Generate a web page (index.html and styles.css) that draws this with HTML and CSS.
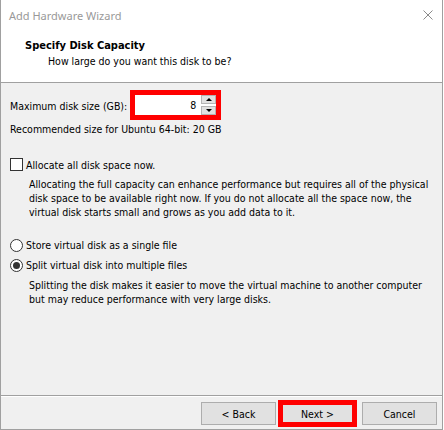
FILE: index.html
```html
<!DOCTYPE html>
<html lang="en">
<head>
<meta charset="utf-8">
<title>Add Hardware Wizard</title>
<link rel="stylesheet" href="styles.css">
</head>
<body>
<div class="window">
  <div class="titlebar">
    <span class="title">Add Hardware Wizard</span>
    <svg class="close" width="10" height="10" viewBox="0 0 10 10"><path d="M0.5 0.5 L9.5 9.5 M9.5 0.5 L0.5 9.5" stroke="#8a8a8a" stroke-width="1" fill="none"/></svg>
  </div>
  <div class="header">
    <div class="h-title">Specify Disk Capacity</div>
    <div class="h-sub">How large do you want this disk to be?</div>
  </div>
  <div class="content">
    <div class="size-row">
      <span class="size-label">Maximum disk size (GB):</span>
      <div class="spin-field highlight">
        <span class="value">8</span>
        <div class="spin">
          <span class="spin-btn"><span class="arrow-up"></span></span>
          <span class="spin-btn"><span class="arrow-down"></span></span>
        </div>
      </div>
    </div>
    <div class="rec">Recommended size for Ubuntu 64-bit: 20 GB</div>
    <div class="check-row">
      <span class="checkbox"></span>
      <span class="opt-label">Allocate all disk space now.</span>
    </div>
    <p class="desc desc-alloc">Allocating the full capacity can enhance performance but requires all of the physical disk space to be available right now. If you do not allocate all the space now, the virtual disk starts small and grows as you add data to it.</p>
    <div class="radio-row radio-first">
      <span class="radio"></span>
      <span class="opt-label">Store virtual disk as a single file</span>
    </div>
    <div class="radio-row radio-second">
      <span class="radio checked"></span>
      <span class="opt-label">Split virtual disk into multiple files</span>
    </div>
    <p class="desc desc-split">Splitting the disk makes it easier to move the virtual machine to another computer but may reduce performance with very large disks.</p>
  </div>
  <div class="footer">
    <button class="btn btn-back">&lt; Back</button>
    <button class="btn btn-next highlight">Next &gt;</button>
    <button class="btn btn-cancel">Cancel</button>
  </div>
</div>
</body>
</html>
```
FILE: styles.css
```css
html, body {
  margin: 0;
  padding: 0;
  background: #ffffff;
}
body {
  width: 444px;
  height: 430px;
  overflow: hidden;
  font-family: "DejaVu Sans Condensed", "DejaVu Sans", sans-serif;
  font-size: 10.5px;
  color: #000;
}
.window {
  width: 441px;
  height: 429px;
  border-left: 1px solid #a0a0a0;
  border-right: 1px solid #a0a0a0;
  border-bottom: 1px solid #a0a0a0;
  display: flex;
  flex-direction: column;
  background: #f0f0f0;
}
.titlebar {
  height: 30px;
  background: #fff;
  display: flex;
  align-items: center;
  justify-content: space-between;
  padding: 0 9px 0 8px;
}
.title {
  font-family: "Noto Sans", sans-serif;
  font-size: 11px;
  color: #999999;
  line-height: 15px;
}
.close {
  display: block;
  margin-top: -1px;
}
.header {
  height: 52px;
  box-sizing: border-box;
  background: #fff;
  border-bottom: 1px solid #a0a0a0;
  height: 53px;
  padding: 9px 0 0 24px;
}
.h-title {
  font-weight: bold;
  font-size: 11px;
  line-height: 13px;
}
.h-sub {
  margin: 3px 0 0 23px;
  line-height: 13px;
}
.content {
  flex: 1;
  padding: 0 0 0 9px;
  line-height: 14px;
}
.size-row {
  display: flex;
  align-items: flex-start;
  margin-top: 9px;
}
.size-label {
  margin-top: 7px;
  margin-right: 5px;
}
.spin-field {
  width: 87px;
  height: 26px;
  box-sizing: border-box;
  border: 1px solid #7a7a7a;
  background: #fff;
  display: flex;
  padding: 2px 2px 2px 2px;
}
.highlight {
  outline: 5px solid #ff0000;
  outline-offset: -3px;
}
.value {
  flex: 1;
  text-align: right;
  padding-right: 5px;
  align-self: center;
}
.spin {
  width: 15px;
  display: flex;
  flex-direction: column;
  justify-content: space-between;
}
.spin-btn {
  height: 9px;
  box-sizing: border-box;
  background: #e1e1e1;
  border: 1px solid #b4b4b4;
  display: flex;
  align-items: center;
  justify-content: center;
}
.arrow-up {
  width: 0;
  height: 0;
  border-left: 3px solid transparent;
  border-right: 3px solid transparent;
  border-bottom: 3px solid #000;
}
.arrow-down {
  width: 0;
  height: 0;
  border-left: 3px solid transparent;
  border-right: 3px solid transparent;
  border-top: 3px solid #000;
}
.rec {
  margin-top: 4px;
}
.check-row {
  display: flex;
  align-items: flex-start;
  margin-top: 22px;
}
.checkbox {
  width: 13px;
  height: 13px;
  box-sizing: border-box;
  border: 1px solid #333;
  background: #fff;
  margin-right: 3px;
}
.desc {
  margin: 5px 0 0 19px;
  line-height: 14px;
}
.desc-alloc {
  width: 405px;
}
.desc-split {
  margin-top: 6px;
  width: 405px;
}
.radio-row {
  display: flex;
  align-items: center;
}
.radio-first {
  margin-top: 19px;
}
.radio-second {
  margin-top: 6px;
}
.radio {
  width: 13px;
  height: 13px;
  box-sizing: border-box;
  border: 1px solid #333;
  border-radius: 50%;
  background: #fff;
  margin-right: 3px;
  display: flex;
  align-items: center;
  justify-content: center;
}
.radio.checked::after {
  content: "";
  width: 7px;
  height: 7px;
  border-radius: 50%;
  background: #333;
}
.footer {
  height: 34px;
  box-sizing: border-box;
  border-top: 1px solid #a0a0a0;
  box-shadow: inset 0 1px 0 #ffffff;
  display: flex;
  justify-content: flex-end;
  align-items: flex-start;
  padding: 6px 5px 0 0;
}
.btn {
  width: 75px;
  height: 23px;
  box-sizing: border-box;
  border: 1px solid #adadad;
  background: #e1e1e1;
  font-family: "DejaVu Sans Condensed", "DejaVu Sans", sans-serif;
  font-size: 10.5px;
  color: #000;
  padding: 0;
  margin: 0;
}
.btn-back {
  margin-right: 4px;
}
.btn-next {
  margin-right: 7px;
}
```
